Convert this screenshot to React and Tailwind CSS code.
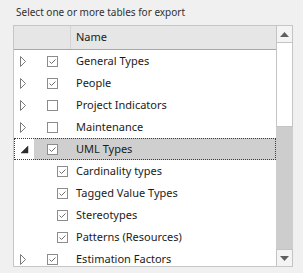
import React from "react";

const rows = [
  { name: "General Types", level: 0, checked: true, exp: "c" },
  { name: "People", level: 0, checked: true, exp: "c" },
  { name: "Project Indicators", level: 0, checked: false, exp: "c" },
  { name: "Maintenance", level: 0, checked: false, exp: "c" },
  { name: "UML Types", level: 0, checked: true, exp: "e", selected: true },
  { name: "Cardinality types", level: 1, checked: true },
  { name: "Tagged Value Types", level: 1, checked: true },
  { name: "Stereotypes", level: 1, checked: true },
  { name: "Patterns (Resources)", level: 1, checked: true },
  { name: "Estimation Factors", level: 0, checked: true, exp: "c" },
];

function Check({ checked }) {
  return (
    <svg width="11" height="11" viewBox="0 0 11 11" className="block">
      <rect x="0.5" y="0.5" width="10" height="10" fill="#ffffff" stroke="#8c8c8c" />
      {checked && (
        <polyline points="2.5,5.5 4.5,7.5 8.5,3.5" fill="none" stroke="#6e6e6e" strokeWidth="1" />
      )}
    </svg>
  );
}

function Expander({ kind }) {
  if (kind === "c")
    return (
      <svg width="7" height="11" viewBox="0 0 7 11" className="block">
        <polygon points="0.5,0.5 5.5,5.5 0.5,10.5" fill="#ffffff" stroke="#7a7a7a" />
      </svg>
    );
  if (kind === "e")
    return (
      <svg width="9" height="9" viewBox="0 0 9 9" className="block">
        <polygon points="8,1 8,8 1,8" fill="#2e2e2e" stroke="#2e2e2e" strokeWidth="0.5" />
      </svg>
    );
  return null;
}

export default function App() {
  return (
    <div
      className="w-[303px] h-[273px] bg-[#f0f0f0] overflow-hidden text-[#1b1b1b]"
      style={{ fontFamily: '"Noto Sans", "Open Sans", sans-serif' }}
    >
      <div className="h-[25px] flex items-center pl-[16px] text-[10px] text-[#303030]">
        Select one or more tables for export
      </div>
      <div className="ml-[13px] w-[280px] h-[242px] flex border-l border-t border-b border-[#c6c6c6]">
        <div className="flex-1 bg-white overflow-hidden text-[11px]">
          <div className="h-[24px] flex bg-[#e6e6e6] border-b border-[#a8a8a8]">
            <div className="w-[57px] border-r border-[#d4d4d4]"></div>
            <div className="pl-[5px] flex items-center">Name</div>
          </div>
          {rows.map((r) => (
            <div key={r.name} className="relative h-[22px] flex">
              <div className="w-[20px] flex items-center pl-[6px] bg-white">
                <Expander kind={r.exp} />
              </div>
              <div className={"flex-1 flex items-center " + (r.selected ? "bg-[#cfcfcf]" : "")}>
                <div className={"w-[42px] flex items-center " + (r.level ? "pl-[23px]" : "pl-[13px]")}>
                  <Check checked={r.checked} />
                </div>
                <div className="whitespace-nowrap">{r.name}</div>
              </div>
              {r.selected && (
                <div className="absolute inset-0 border border-dotted border-[#3c3c3c] pointer-events-none"></div>
              )}
            </div>
          ))}
        </div>
        <div className="w-[17px] flex flex-col bg-[#cdcdcd]">
          <div className="h-[17px] flex items-center justify-center bg-[#f4f4f4] border border-t-0 border-[#c4c4c4]">
            <svg width="9" height="5" viewBox="0 0 9 5" className="block">
              <polygon points="4.5,0 9,5 0,5" fill="#606060" />
            </svg>
          </div>
          <div className="h-[84px] bg-white border border-t-0 border-[#c4c4c4]"></div>
          <div className="flex-1"></div>
          <div className="h-[17px] flex items-center justify-center bg-[#f4f4f4] border border-b-0 border-[#c4c4c4]">
            <svg width="9" height="5" viewBox="0 0 9 5" className="block">
              <polygon points="0,0 9,0 4.5,5" fill="#606060" />
            </svg>
          </div>
        </div>
      </div>
    </div>
  );
}
